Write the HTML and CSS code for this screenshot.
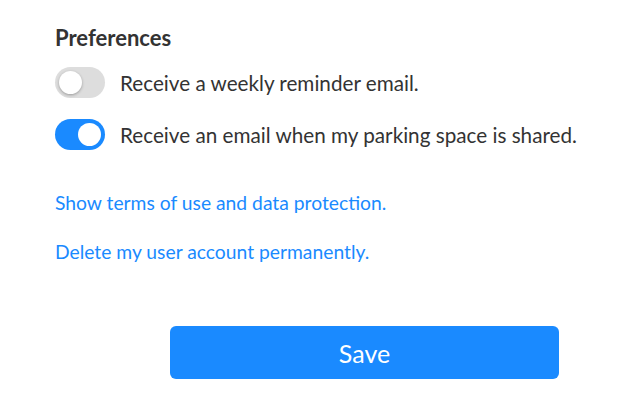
FILE: index.html
```html
<!DOCTYPE html>
<html>
<head>
<meta charset="utf-8">
<link rel="stylesheet" href="styles.css">
</head>
<body>
<div class="page">
  <h2 class="title">Preferences</h2>
  <div class="pref">
    <span class="toggle"><span class="knob"></span></span>
    <span class="label">Receive a weekly reminder email.</span>
  </div>
  <div class="pref">
    <span class="toggle on"><span class="knob"></span></span>
    <span class="label">Receive an email when my parking space is shared.</span>
  </div>
  <a class="link first" href="#">Show terms of use and data protection.</a>
  <a class="link" href="#">Delete my user account permanently.</a>
  <div class="actions">
    <button class="save">Save</button>
  </div>
</div>
</body>
</html>
```
FILE: styles.css
```css
html, body { margin: 0; padding: 0; background: #fff; }
body { font-family: Lato, "Open Sans", sans-serif; color: #333; }
.page { padding: 25px 0 0 55px; display: flex; flex-direction: column; align-items: flex-start; }
.title { margin: 0 0 16px; font-size: 22px; font-weight: 700; line-height: 26px; color: #333; }
.pref { display: flex; align-items: center; gap: 15px; height: 31px; margin-bottom: 21px; }
.toggle { width: 50px; height: 31px; border-radius: 16px; background: #dddddd; position: relative; display: block; flex: none; }
.toggle .knob { position: absolute; top: 4px; left: 4px; width: 23px; height: 23px; border-radius: 50%; background: #fff; box-shadow: 0 1px 3px rgba(0,0,0,0.3); }
.toggle.on { background: #1a8aff; }
.toggle.on .knob { left: 23px; box-shadow: none; }
.label { font-size: 20.7px; line-height: 24px; color: #333; }
.link { font-size: 19.3px; line-height: 23px; color: #1a8aff; text-decoration: none; margin-bottom: 26px; }
.link.first { margin-top: 20px; }
.actions { align-self: stretch; padding: 37px 0 0 115px; }
.save { width: 389px; height: 53px; border: 0; border-radius: 6px; background: #1a8aff; color: #fff; font-family: Lato, sans-serif; font-size: 25px; }
```
